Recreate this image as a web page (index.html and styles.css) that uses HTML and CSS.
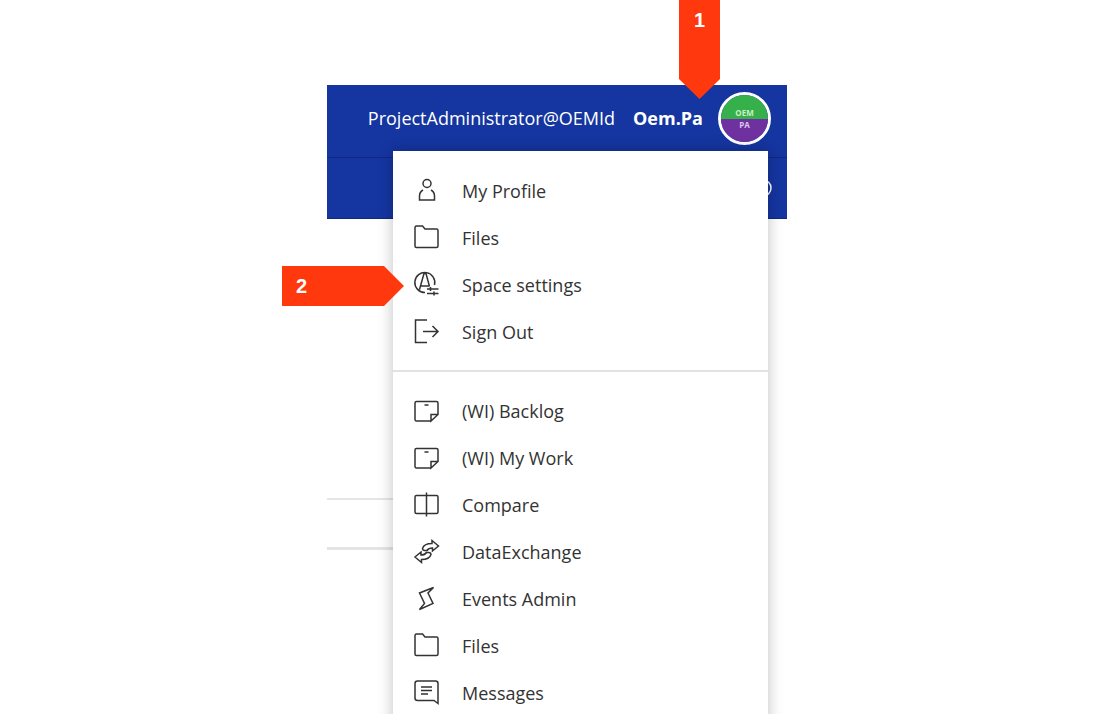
FILE: index.html
```html
<!DOCTYPE html>
<html lang="en">
<head>
    <meta charset="UTF-8">
    <meta name="viewport" content="width=device-width, initial-scale=1.0">
    <title>Space settings</title>
    <link rel="stylesheet" href="styles.css">
</head>
<body>
    <!-- Shared icon shapes -->
    <svg class="sprite" aria-hidden="true">
        <symbol id="folder" viewBox="0 0 25 25">
            <path d="M1 21V2.500Q1 1 2.500 1H8.500L11 4H22.500Q24 4 24 5.500V21Q24 22.500 22.500 22.500H2.500Q1 22.500 1 21Z"/>
        </symbol>
        <symbol id="note" viewBox="0 0 25 25">
            <path d="M17 23H2.500Q1 23 1 21.500V5Q1 3.500 2.500 3.500H22.500Q24 3.500 24 5V16.500L17 23V16.500H24M10.500 7H14.500"/>
        </symbol>
    </svg>

    <div class="app">
        <header class="topbar">
            <span class="account">ProjectAdministrator@OEMId</span>
            <button class="user" type="button">
                <strong>Oem.Pa</strong>
                <span class="avatar"><span class="oem">OEM</span><span class="pa">PA</span></span>
            </button>
        </header>
        <div class="subbar">
            <svg class="help" viewBox="0 0 18 18" aria-hidden="true"><circle cx="9" cy="9" r="8"/></svg>
        </div>
        <div class="lines"></div>

        <!-- User menu -->
        <nav class="menu">
            <ul>
                <li><a href="#">
                    <svg viewBox="0 0 25 25"><circle cx="13" cy="5.500" r="4"/><path d="M9 12Q5.500 14 5.500 18V22H20.500V18Q20.500 14 17 12"/></svg>
                    My Profile
                </a></li>
                <li><a href="#"><svg><use href="#folder"/></svg>Files</a></li>
                <li><a href="#">
                    <svg viewBox="0 0 25 25"><path d="M20.500 13A10 10 0 1 0 11 20.500M5.500 17.500L10 1.500H12L15.500 14.500M7 14H15M13 17H24.500M13 21.500H24.500M16.500 15V19M20 19.500V23.500"/></svg>
                    Space settings
                </a></li>
                <li><a href="#">
                    <svg viewBox="0 0 25 25"><path d="M13 1H1.500V23.500H13M9 12.500H24M18.500 7L24 12.500L18.500 18"/></svg>
                    Sign Out
                </a></li>
            </ul>
            <ul>
                <li><a href="#"><svg><use href="#note"/></svg>(WI) Backlog</a></li>
                <li><a href="#"><svg><use href="#note"/></svg>(WI) My Work</a></li>
                <li><a href="#">
                    <svg viewBox="0 0 25 25"><rect x="1" y="3.500" width="23" height="18" rx="1.500"/><path d="M12.500 0.500V24.500"/></svg>
                    Compare
                </a></li>
                <li><a href="#">
                    <svg viewBox="0 0 25 25"><path d="M13 11.500Q8.500 12 8.500 9.500Q10 4.500 18 4.500V1.500L24.500 7L18.500 12V9Q14.500 9 13 11.500ZM12.500 13.500Q17 13 17 15.500Q15.500 20.500 7.500 20.500V23.500L1 18L7 13V16Q11 16 12.500 13.500Z"/></svg>
                    DataExchange
                </a></li>
                <li><a href="#">
                    <svg viewBox="0 0 25 25"><path d="M19.500 1.500L5.500 7L10.500 17.500L5.500 23.500L19 17.500L14 7Z"/></svg>
                    Events Admin
                </a></li>
                <li><a href="#"><svg><use href="#folder"/></svg>Files</a></li>
                <li><a href="#">
                    <svg viewBox="0 0 25 25"><path d="M24 23.500L20 20.500H3.500Q1 20.500 1 18V3.500Q1 1 3.500 1H21.500Q24 1 24 3.500ZM7 7H18M7 10.500H18M7 14H14"/></svg>
                    Messages
                </a></li>
            </ul>
        </nav>

        <!-- Step markers -->
        <div class="step step-down">1</div>
        <div class="step step-right">2</div>
    </div>
</body>
</html>
```

FILE: styles.css
```css
body {
    margin: 0;
    height: 100vh;
    overflow: hidden;
    background-color: #fff;
    font-family: "Open Sans", "Noto Sans", sans-serif;
    font-size: 18px;
    color: #333;
}
.sprite {
    position: absolute;
    width: 0;
    height: 0;
}
.app {
    position: relative;
    width: 460px;
    margin: 0 auto;
    padding-top: 85px;
}
.topbar {
    display: flex;
    align-items: center;
    justify-content: flex-end;
    gap: 18px;
    box-sizing: border-box;
    height: 73px;
    padding: 0 16px 6px 0;
    background-color: #1535a0;
    border-bottom: 1px solid #10297d;
    color: #fff;
}
.user {
    display: flex;
    align-items: center;
    gap: 15px;
    padding: 0;
    border: none;
    background: none;
    color: inherit;
    font: inherit;
    cursor: pointer;
}
.avatar {
    display: flex;
    flex-direction: column;
    box-sizing: border-box;
    width: 53px;
    height: 53px;
    border: 3px solid #fff;
    border-radius: 50%;
    overflow: hidden;
    font-size: 8px;
    font-weight: bold;
    line-height: 11px;
    text-align: center;
}
.oem {
    box-sizing: border-box;
    height: 24px;
    padding-top: 12px;
    background-color: #36b04b;
    color: #c9f0c8;
}
.pa {
    flex: 1;
    background-color: #6f31a0;
    color: #dcc8ee;
}
.subbar {
    display: flex;
    align-items: center;
    justify-content: flex-end;
    box-sizing: border-box;
    height: 61px;
    padding-right: 15px;
    background-color: #1535a0;
    border-bottom: 1px solid #10297d;
}
.help {
    width: 18px;
    height: 18px;
    fill: none;
    stroke: #fff;
    stroke-width: 1.5;
}
.lines {
    width: 66px;
    height: 47px;
    margin-top: 279px;
    border-top: 2px solid #e6e6e6;
    border-bottom: 3px solid #e4e4e4;
}
.menu {
    position: absolute;
    top: 151px;
    left: 66px;
    right: 19px;
    background-color: #fff;
    box-shadow: 0 0 14px rgba(0, 0, 0, 0.25);
}
.menu ul {
    margin: 0;
    padding: 16px 0 15px;
    list-style: none;
}
.menu ul + ul {
    padding-top: 15px;
    border-top: 2px solid #e2e2e2;
}
.menu a {
    display: flex;
    align-items: center;
    gap: 23px;
    height: 47px;
    padding-left: 21px;
    color: inherit;
    text-decoration: none;
}
.menu svg {
    width: 25px;
    height: 25px;
    overflow: visible;
    fill: none;
    stroke: #333;
    stroke-width: 1.5;
}
.step {
    position: absolute;
    box-sizing: border-box;
    background-color: #ff390d;
    color: #fff;
    font-family: "Liberation Sans", Arial, sans-serif;
    font-size: 20px;
    font-weight: bold;
    line-height: 40px;
}
.step-down {
    top: 0;
    left: 352px;
    width: 41px;
    height: 99px;
    text-align: center;
    clip-path: polygon(0 0, 100% 0, 100% 79px, 50% 100%, 0 79px);
}
.step-right {
    top: 266px;
    left: -45px;
    width: 122px;
    height: 40px;
    padding-left: 14px;
    clip-path: polygon(0 0, 102px 0, 100% 50%, 102px 100%, 0 100%);
}
```
